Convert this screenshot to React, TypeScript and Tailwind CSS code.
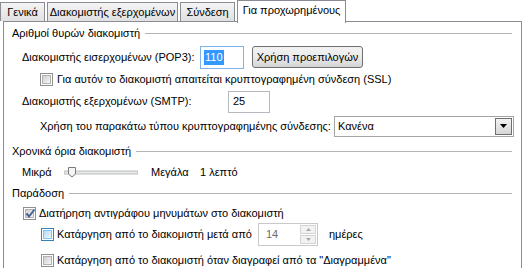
import React, { FC, ReactNode } from 'react';

const Checkbox: FC<{ checked?: boolean; hover?: boolean }> = ({ checked, hover }) => (
  <div
    className={`${hover ? 'border-[#3c7fb1]' : 'border-[#8e8f8f]'} w-[13px] h-[13px] shrink-0 border bg-white p-[1px]`}
  >
    <div
      className={`${
        hover
          ? 'bg-gradient-to-br from-[#b9dcf5] to-[#eaf6fd] border-[#79c6f9]'
          : 'bg-gradient-to-br from-[#d0d0d0] to-[#f6f6f6] border-[#b2b2b2]'
      } w-full h-full border relative`}
    >
      {checked && (
        <svg className="absolute -left-[1px] -top-[2px]" width="11" height="11" viewBox="0 0 11 11">
          <path d="M1.5 5.5 L4 8.5 L9.5 1.5" stroke="#4a5f97" strokeWidth="2" fill="none" />
        </svg>
      )}
    </div>
  </div>
);

const GroupTitle: FC<{ title: string; className?: string }> = ({ title, className }) => (
  <div className={`flex items-center h-4 pl-[8px] pr-[9px] ${className ?? ''}`}>
    <span className="whitespace-nowrap">{title}</span>
    <div className="flex-1 h-px bg-[#b4b4b4] ml-[5px]" />
  </div>
);

const Tab: FC<{ label: string; width: string; active?: boolean; children?: ReactNode }> = ({
  label,
  width,
  active,
}) =>
  active ? (
    <div
      className={`${width} h-[23px] -mb-px border border-b-0 border-[#898c95] bg-white flex items-center justify-center pb-[3px] relative z-10`}
    >
      {label}
    </div>
  ) : (
    <div
      className={`${width} h-[19px] mt-[2px] border border-b-0 border-[#898c95] bg-gradient-to-b from-[#f4f4f4] to-[#e1e1e1] flex items-center justify-center`}
    >
      {label}
    </div>
  );

const App: FC = () => {
  return (
    <div className="w-[524px] h-[268px] overflow-hidden bg-white text-black text-[11px] leading-none font-['Liberation_Sans',Arial,sans-serif]">
      <div className="flex items-start gap-[2px] h-[21px]">
        <Tab label="Γενικά" width="w-[45px]" />
        <Tab label="Διακομιστής εξερχομένων" width="w-[131px]" />
        <Tab label="Σύνδεση" width="w-[55px]" />
        <Tab label="Για προχωρημένους" width="w-[109px]" active />
      </div>

      <div className="ml-[3px] w-[519px] h-[260px] border border-b-0 border-[#898c95] flex flex-col">
        <GroupTitle title="Αριθμοί θυρών διακομιστή" className="mt-[3px]" />

        <div className="flex items-center h-6 mt-1 pl-[18px]">
          <span className="w-[178px]">Διακομιστής εισερχομένων (POP3):</span>
          <div className="w-[44px] h-[23px] border border-[#7eb4ea] flex items-center pl-[3px]">
            <span className="bg-[#3399ff] text-white px-[1px] py-[2px]">110</span>
          </div>
          <button className="ml-[8px] w-[111px] h-[22px] rounded-[3px] border border-[#707070] bg-gradient-to-b from-[#f2f2f2] via-[#ebebeb] to-[#d4d4d4]">
            Χρήση προεπιλογών
          </button>
        </div>

        <div className="flex items-center h-[18px] mt-px pl-[36px] gap-[4px]">
          <Checkbox />
          <span>Για αυτόν το διακομιστή απαιτείται κρυπτογραφημένη σύνδεση (SSL)</span>
        </div>

        <div className="flex items-center h-[23px] mt-[2px] pl-[18px]">
          <span className="w-[206px]">Διακομιστής εξερχομένων (SMTP):</span>
          <div className="w-[42px] h-[22px] border border-[#b5b9c0] flex items-center pl-[4px]">25</div>
        </div>

        <div className="flex items-center h-[22px] mt-[2px] pl-[36px]">
          <span className="w-[294px]">Χρήση του παρακάτω τύπου κρυπτογραφημένης σύνδεσης:</span>
          <div className="w-[180px] h-[21px] border border-[#a5a5a5] flex items-center justify-between pl-[3px] pr-px">
            <span>Κανένα</span>
            <div className="w-[17px] h-[17px] border border-[#6f6f6f] bg-gradient-to-b from-[#f3f3f3] to-[#d6d6d6] flex items-center justify-center">
              <svg width="7" height="4" viewBox="0 0 7 4">
                <path d="M0 0 H7 L3.5 4 Z" fill="#000" />
              </svg>
            </div>
          </div>
        </div>

        <GroupTitle title="Χρονικά όρια διακομιστή" className="mt-[6px]" />

        <div className="flex items-center h-5 mt-[3px] pl-[18px]">
          <span className="w-[42px]">Μικρά</span>
          <svg width="74" height="12" viewBox="0 0 74 12">
            <rect x="0" y="5" width="74" height="3" fill="#e7eaea" stroke="#b0b0b0" strokeWidth="0.8" />
            <path d="M4.5 1.5 H11.5 V8 L8 11 L4.5 8 Z" fill="#f4f4f4" stroke="#7a7a7a" />
          </svg>
          <span className="ml-[13px] w-[49px]">Μεγάλα</span>
          <span>1 λεπτό</span>
        </div>

        <GroupTitle title="Παράδοση" className="mt-[3px]" />

        <div className="flex items-center h-[18px] mt-[3px] pl-[19px] gap-[3px]">
          <Checkbox checked />
          <span>Διατήρηση αντιγράφου μηνυμάτων στο διακομιστή</span>
        </div>

        <div className="flex items-center h-[23px] mt-px pl-[37px]">
          <Checkbox hover />
          <span className="ml-[3px] w-[201px]">Κατάργηση από το διακομιστή μετά από</span>
          <div className="w-[60px] h-[23px] border border-[#c9c9c9] flex items-center justify-between pl-[7px] pr-px text-[#6d6d6d]">
            <span>14</span>
            <div className="flex flex-col gap-px">
              <div className="w-[16px] h-[9px] border border-[#d4d4d4] bg-[#f2f2f2] flex items-center justify-center">
                <svg width="5" height="3" viewBox="0 0 5 3">
                  <path d="M0 3 H5 L2.5 0 Z" fill="#a8a8a8" />
                </svg>
              </div>
              <div className="w-[16px] h-[9px] border border-[#d4d4d4] bg-[#f2f2f2] flex items-center justify-center">
                <svg width="5" height="3" viewBox="0 0 5 3">
                  <path d="M0 0 H5 L2.5 3 Z" fill="#a8a8a8" />
                </svg>
              </div>
            </div>
          </div>
          <span className="ml-[11px]">ημέρες</span>
        </div>

        <div className="flex items-center h-[18px] mt-[5px] pl-[37px] gap-[3px]">
          <Checkbox />
          <span>Κατάργηση από το διακομιστή όταν διαγραφεί από τα "Διαγραμμένα"</span>
        </div>
      </div>
    </div>
  );
};

export default App;
